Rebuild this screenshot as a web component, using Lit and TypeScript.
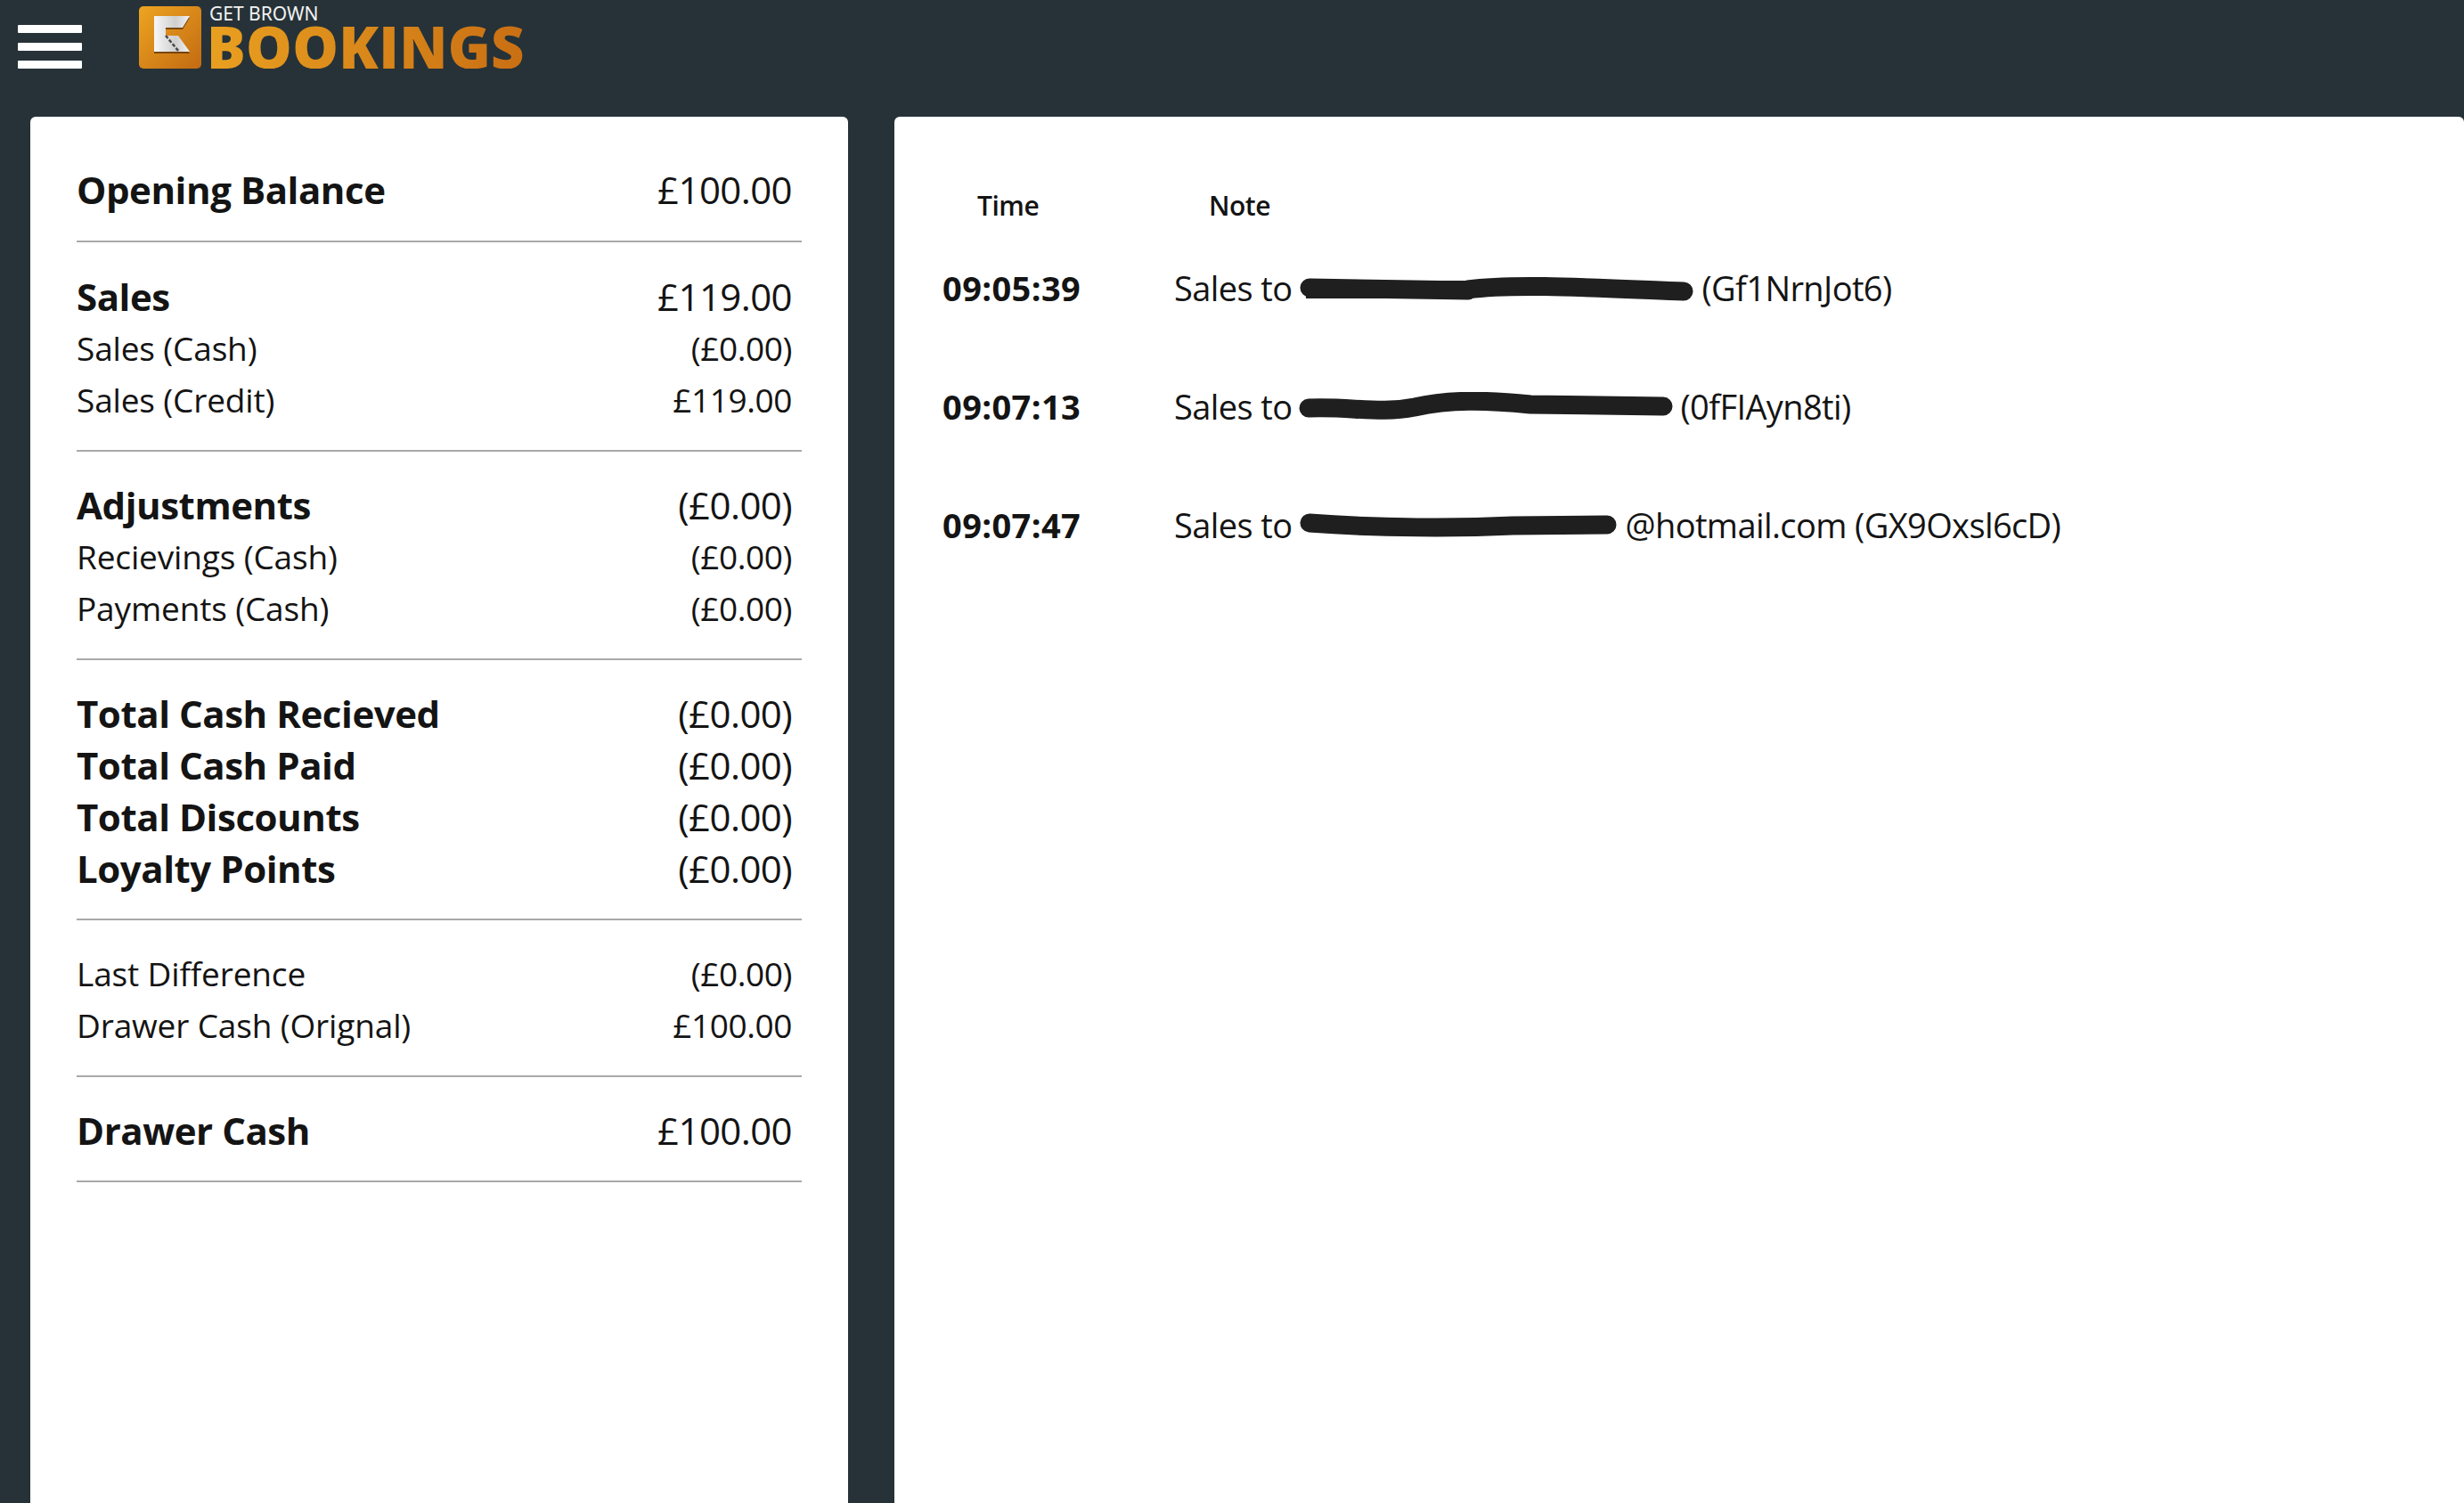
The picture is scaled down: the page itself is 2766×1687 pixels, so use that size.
import { LitElement, html, css, svg } from "lit";
import { customElement } from "lit/decorators.js";

type Row = { label: string; value: string; strong?: boolean };

const groups: { rows: Row[]; cls: string }[] = [
  { cls: "g1", rows: [{ label: "Opening Balance", value: "£100.00", strong: true }] },
  {
    cls: "g2",
    rows: [
      { label: "Sales", value: "£119.00", strong: true },
      { label: "Sales (Cash)", value: "(£0.00)" },
      { label: "Sales (Credit)", value: "£119.00" },
    ],
  },
  {
    cls: "g2",
    rows: [
      { label: "Adjustments", value: "(£0.00)", strong: true },
      { label: "Recievings (Cash)", value: "(£0.00)" },
      { label: "Payments (Cash)", value: "(£0.00)" },
    ],
  },
  {
    cls: "g2",
    rows: [
      { label: "Total Cash Recieved", value: "(£0.00)", strong: true },
      { label: "Total Cash Paid", value: "(£0.00)", strong: true },
      { label: "Total Discounts", value: "(£0.00)", strong: true },
      { label: "Loyalty Points", value: "(£0.00)", strong: true },
    ],
  },
  {
    cls: "g2",
    rows: [
      { label: "Last Difference", value: "(£0.00)" },
      { label: "Drawer Cash (Orignal)", value: "£100.00" },
    ],
  },
  { cls: "g2", rows: [{ label: "Drawer Cash", value: "£100.00", strong: true }] },
];

const logs = [
  {
    time: "09:05:39",
    width: 444,
    after: "(Gf1NrnJot6)",
    path: "M12 16 L190 19 M190 18 C240 11 330 16 432 20",
    thick: "M8 8 H190 V28 H8 Z",
  },
  {
    time: "09:07:13",
    width: 420,
    after: "(0fFIAyn8ti)",
    path: "M11 18 C60 16 90 25 130 17 C170 8 210 9 260 14 L409 16",
    thick: "",
  },
  {
    time: "09:07:47",
    width: 358,
    after: "@hotmail.com (GX9Oxsl6cD)",
    path: "M12 14 C90 20 180 20 240 17 L346 16",
    thick: "",
  },
];

@customElement("app-root")
export class AppRoot extends LitElement {
  static styles = css`
    :host {
      display: block;
      height: 1687px;
      overflow: hidden;
      background: #263238;
      font-family: "Open Sans", "Noto Sans", sans-serif;
      color: #141414;
    }
    .top {
      height: 131px;
      display: flex;
      align-items: flex-start;
      box-sizing: border-box;
    }
    .burger {
      width: 72px;
      margin: 28px 0 0 20px;
      display: flex;
      flex-direction: column;
      gap: 11px;
    }
    .burger i {
      display: block;
      height: 9px;
      background: #fff;
      border-radius: 1px;
    }
    .logo {
      margin: 7px 0 0 64px;
      display: flex;
      gap: 6px;
    }
    .mark {
      width: 70px;
      height: 70px;
      display: block;
    }
    .word {
      display: flex;
      flex-direction: column;
    }
    .get {
      font-family: "Noto Sans", sans-serif;
      font-size: 21px;
      line-height: 17px;
      height: 21px;
      margin-left: 3px;
      color: #f2f2f2;
      white-space: nowrap;
    }
    .book {
      font-family: "Open Sans", sans-serif;
      font-weight: 800;
      font-size: 65px;
      line-height: 49px;
      letter-spacing: 0.3px;
      background: linear-gradient(90deg, #e9a020, #c96f14);
      -webkit-background-clip: text;
      background-clip: text;
      color: transparent;
    }
    .main {
      display: flex;
      height: 1556px;
      padding-left: 34px;
      gap: 52px;
    }
    .card {
      background: #fff;
      border-radius: 6px 6px 0 0;
    }
    .left {
      width: 918px;
      flex: none;
      box-sizing: border-box;
      padding: 54px 52px 0;
    }
    .right {
      flex: 1;
      padding: 78px 0 0 54px;
    }
    .group {
      border-bottom: 2px solid #a9a9a9;
    }
    .g1 {
      padding-bottom: 27px;
      margin-bottom: 33px;
    }
    .g2 {
      padding-bottom: 26px;
      margin-bottom: 32px;
    }
    .row {
      display: flex;
      justify-content: space-between;
      align-items: center;
      box-sizing: border-box;
      padding: 0 11px 3px 0;
      height: 58px;
      font-size: 37px;
      letter-spacing: -0.15px;
      white-space: nowrap;
    }
    .row .value {
      letter-spacing: -0.4px;
    }
    .row.strong .label {
      font-weight: 700;
      font-size: 42px;
      letter-spacing: -0.45px;
    }
    .row.strong .value {
      font-size: 42px;
      letter-spacing: -0.6px;
    }
    .cols {
      display: flex;
      height: 42px;
      align-items: center;
      font-size: 30px;
      font-weight: 600;
      letter-spacing: -0.5px;
      margin-bottom: 44px;
    }
    .cols span:first-child {
      width: 260px;
      margin-left: 39px;
    }
    .log {
      display: flex;
      align-items: center;
      height: 56px;
      margin-bottom: 77px;
      font-size: 38px;
      letter-spacing: -0.6px;
      white-space: nowrap;
    }
    .log b {
      width: 260px;
      font-size: 38px;
      letter-spacing: 0.4px;
      font-weight: 700;
    }
    .redact {
      display: block;
      height: 32px;
      margin: 0 8px;
    }
    .stroke {
      fill: none;
      stroke: #1f1f1f;
      stroke-width: 21;
      stroke-linecap: round;
    }
    .blot {
      fill: #1f1f1f;
    }
  `;

  private mark() {
    return html`<svg class="mark" viewBox="0 0 70 70">
      <defs>
        <linearGradient id="o" x1="0" y1="0" x2="1" y2="1">
          <stop offset="0" stop-color="#eda521" />
          <stop offset="1" stop-color="#c26a12" />
        </linearGradient>
        <linearGradient id="w" x1="0" y1="0" x2="1" y2="0">
          <stop offset="0" stop-color="#f7f7f7" />
          <stop offset="0.6" stop-color="#cfcfcf" />
          <stop offset="1" stop-color="#f2f2f2" />
        </linearGradient>
      </defs>
      <rect width="70" height="70" rx="5" fill="url(#o)" />
      ${svg`<path d="M17 13H57L49 26H30V35H44L57 53H17Z" fill="#5a3208" opacity="0.75" />
      <path d="M17 11H57L49 24H30V33H44L57 51H17Z" fill="url(#w)" />
      <path d="M30 33L45 51" stroke="#4a4a4a" stroke-width="2.5" stroke-dasharray="4 2" fill="none" />`}
    </svg>`;
  }

  render() {
    return html`
      <div class="top">
        <div class="burger"><i></i><i></i><i></i></div>
        <div class="logo">
          ${this.mark()}
          <div class="word">
            <div class="get">GET BROWN</div>
            <div class="book">BOOKINGS</div>
          </div>
        </div>
      </div>
      <div class="main">
        <section class="card left">
          ${groups.map(
            (g) => html`<div class="group ${g.cls}">
              ${g.rows.map(
                (r) => html`<div class="row ${r.strong ? "strong" : ""}">
                  <span class="label">${r.label}</span><span class="value">${r.value}</span>
                </div>`
              )}
            </div>`
          )}
        </section>
        <section class="card right">
          <div class="cols"><span>Time</span><span>Note</span></div>
          ${logs.map(
            (l) => html`<div class="log">
              <b>${l.time}</b><span>Sales to</span>
              <svg class="redact" style="width:${l.width}px" viewBox="0 0 ${l.width} 32">
                ${svg`<path class="stroke" d="${l.path}" />`}
                ${l.thick ? svg`<path class="blot" d="${l.thick}" />` : ""}
              </svg>
              <span>${l.after}</span>
            </div>`
          )}
        </section>
      </div>
    `;
  }
}
